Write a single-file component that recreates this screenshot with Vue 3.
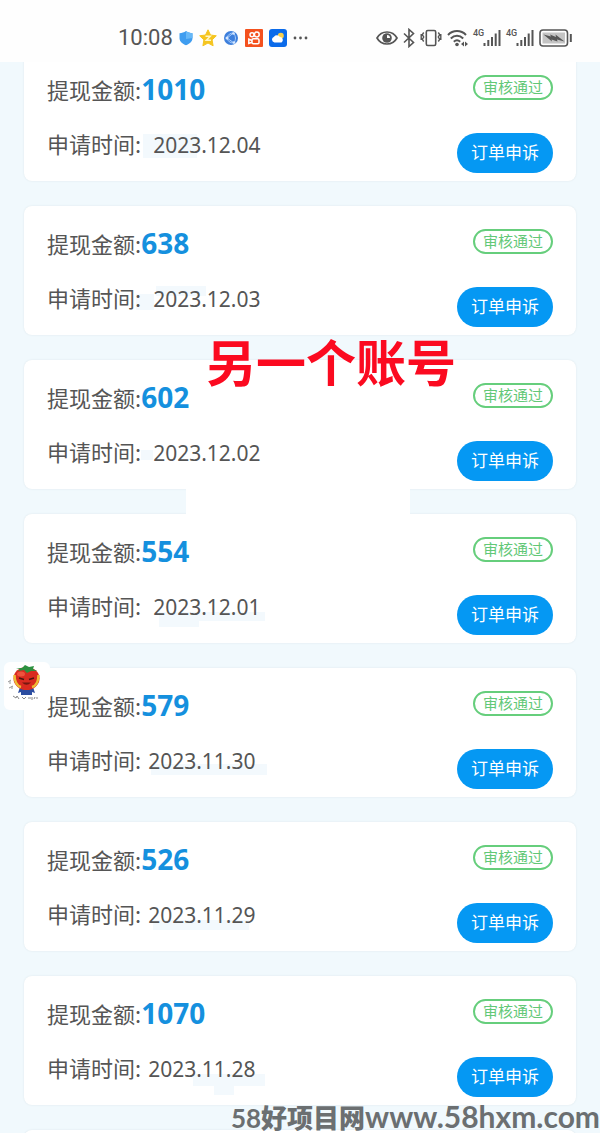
<template>
  <div class="page">
    <header class="status-bar">
      <div class="status-left">
        <span class="clock">10:08</span>
        <svg width="14" height="16" viewBox="0 0 14 16">
          <path d="M7 1C9 2.400 11 3 13.500 3.200V8C13.500 11.500 10.500 14 7 15.300C3.500 14 .5 11.500 .5 8V3.200C3 3 5 2.400 7 1Z" fill="#3f9df0" />
          <path d="M7 1C9 2.400 11 3 13.500 3.200V8L7 9Z" fill="#67b8f7" />
        </svg>
        <svg width="18" height="18" viewBox="0 0 18 18">
          <path d="M9 .8L11.500 6L17.300 6.800L13.100 10.900L14.100 16.800L9 14L3.900 16.800L4.900 10.900L.7 6.800L6.500 6Z" fill="#f5c51f" stroke="#f5c51f" stroke-linejoin="round" />
          <path d="M6.500 7.200H11.300L7.300 11.300H12" fill="none" stroke="#fff6c8" stroke-width="1.500" />
        </svg>
        <svg width="16" height="16" viewBox="0 0 16 16">
          <circle cx="8" cy="8" r="7" fill="#3d7fdc" />
          <path d="M10.500 3L4 8L11 13M10.500 3C13 6 13 10 11 13M4 8C5 4.500 7 3 10.500 3M4 8C5 11.500 7 13 11 13" fill="none" stroke="#a9cdfb" stroke-width="1" />
          <circle cx="4" cy="8" r="1.500" fill="#d5e7ff" />
          <circle cx="10.500" cy="3.500" r="1.300" fill="#d5e7ff" />
          <circle cx="11" cy="12.500" r="1.300" fill="#d5e7ff" />
        </svg>
        <svg width="18" height="18" viewBox="0 0 18 18">
          <rect width="18" height="18" rx="1" fill="#f4511e" />
          <g fill="none" stroke="#fff" stroke-width="1.500">
            <circle cx="7" cy="5.800" r="2" />
            <circle cx="11.800" cy="5.500" r="2.400" />
            <rect x="7" y="9.800" width="7" height="5" rx="1.300" />
            <path d="M7 11.500L3.800 10.200V14.500L7 13.200" />
          </g>
        </svg>
        <svg width="18" height="18" viewBox="0 0 18 18">
          <rect width="18" height="18" rx="3" fill="#0b6bea" />
          <circle cx="11.800" cy="6.800" r="3" fill="#f8cf4d" />
          <path d="M5.500 13.500A3 3 0 0 1 5 7.700A3.700 3.700 0 0 1 11 8A3 3 0 0 1 12.500 13.500Z" fill="#fff" />
        </svg>
        <svg width="15" height="4" viewBox="0 0 15 4">
          <g fill="#555">
            <circle cx="2" cy="2" r="1.400" />
            <circle cx="7.500" cy="2" r="1.400" />
            <circle cx="13" cy="2" r="1.400" />
          </g>
        </svg>
      </div>

      <div class="status-right">
        <svg width="22" height="16" viewBox="0 0 22 16">
          <path d="M1 8C5.500 0 16.500 0 21 8C16.500 16 5.500 16 1 8Z" fill="none" stroke="#555" stroke-width="1.700" />
          <circle cx="11" cy="8" r="4.800" fill="#555" />
          <path d="M11 5A3 3 0 0 1 14 8H11Z" fill="#fff" />
        </svg>
        <svg width="12" height="20" viewBox="0 0 12 20">
          <path d="M1 5.500L10.500 14.500L6 18.500V1.500L10.500 5.500L1 14.500" fill="none" stroke="#555" stroke-width="1.600" />
        </svg>
        <svg width="22" height="18" viewBox="0 0 22 18">
          <g fill="none" stroke="#555">
            <rect x="6.300" y="1.500" width="9.400" height="15" rx="1.500" stroke-width="1.600" />
            <path d="M3.700 3.500L2.300 5.700L3.700 8L2.300 10.300L3.700 12.500M1.200 5V11M18.300 3.500L19.700 5.700L18.300 8L19.700 10.300L18.300 12.500M20.800 5V11" stroke-width="1.400" />
          </g>
        </svg>
        <svg width="21" height="18" viewBox="0 0 21 18">
          <g fill="none" stroke="#555" stroke-width="2">
            <path d="M1 6C6 .8 14 .8 19 6" />
            <path d="M3.800 9.500C7.500 5.800 12.500 5.800 16.200 9.500" />
            <path d="M6.800 12.700C8.800 10.800 11.200 10.800 13.200 12.700" />
          </g>
          <circle cx="10" cy="15.500" r="1.800" fill="#555" />
          <path d="M17 12.500V17.500L14 15ZM18 12.500V17.500L21 15Z" fill="#555" />
        </svg>
        <div v-for="n in 2" :key="n" class="signal">
          <span>4G</span>
          <svg width="18" height="18" viewBox="0 0 18 18">
            <path d="M1.500 14V17M5.300 11V17M9 8V17M12.700 4.500V17M16.500 1V17" stroke="#555" stroke-width="2" />
          </svg>
        </div>
        <svg width="33" height="18" viewBox="0 0 33 18">
          <rect x="1" y="1" width="27.500" height="16" rx="3" fill="none" stroke="#555" stroke-width="1.600" />
          <rect x="3.500" y="3.500" width="22.500" height="11" fill="#c4c4c4" />
          <path d="M4.500 5.500L12 7.500L11 5.500L17 8L16.500 5.500L25.500 12.500L18 10.500L18.500 12.500L12.500 10.500L13 12.500Z" fill="#555" />
          <path d="M31.800 5V13" stroke="#555" stroke-width="2" />
        </svg>
      </div>
    </header>

    <main class="list">
      <section v-for="item in records" :key="item.date" class="card">
        <div class="row">
          <p class="label">提现金额:<strong>{{ item.amount }}</strong></p>
          <span class="badge">审核通过</span>
        </div>
        <div class="row row-time">
          <p class="label">
            申请时间:<time :class="{ near: item.near }">{{ item.date }}</time>
          </p>
          <button type="button" class="appeal">订单申诉</button>
        </div>
        <i
          v-for="(s, i) in item.smears"
          :key="i"
          class="smear"
          :style="{ left: s[0] + 'px', top: s[1] + 'px', width: s[2] + 'px', height: s[3] + 'px' }"
        ></i>
      </section>
      <section class="card"></section>
      <div class="patch"></div>
    </main>

    <h1 class="caption">另一个账号</h1>

    <div class="mascot">
      <svg width="46" height="48" viewBox="0 0 46 48">
        <path d="M16 25H29L31 31L28 30V33H17V30L14 31Z" fill="#2c4da0" />
        <ellipse cx="22.500" cy="16.500" rx="13" ry="11.500" fill="#d92b20" />
        <ellipse cx="17" cy="12" rx="4" ry="2.500" fill="#f0523d" />
        <path d="M12 6L18 6L21 3L25 5L30 4L29 7L33 9L27 9L23 11L20 8L14 9L16 7Z" fill="#2c9140" />
        <path d="M10.500 13C10.500 19 13 24 17 25M34.500 13C34.500 19 32 24 28 25" fill="none" stroke="#edbd35" stroke-width="2.500" />
        <path d="M15 16L20 17.500M30 16L25 17.500" stroke="#4a1712" stroke-width="1.500" />
        <path d="M18 20.500Q22.500 25 27 20.500Z" fill="#751810" />
        <path d="M4 20L7 18M6 19V22M5 26L9 24M8 24V27" stroke="#999" stroke-width="1" />
        <path d="M9 34L12 36L13 34L15 37M18 35L20 37L22 35M24 36H27M28 35V38M31 35L30 37M33 35V37" fill="none" stroke="#888" stroke-width="1" />
      </svg>
    </div>

    <footer class="watermark"><span class="prefix">58</span><b>好项目网</b><span>www.58hxm.com</span></footer>
  </div>
</template>

<script setup>
  // near: 日期緊貼標籤；smears: 日期周圍的淡藍色塊 [left, top, width, height]
  const records = [
    { amount: 1010, date: '2023.12.04', near: false, smears: [[119, 82, 54, 24]] },
    { amount: 638, date: '2023.12.03', near: false, smears: [[112, 88, 18, 16], [132, 80, 50, 10]] },
    { amount: 602, date: '2023.12.02', near: false, smears: [[117, 90, 12, 10]] },
    { amount: 554, date: '2023.12.01', near: false, smears: [[135, 98, 40, 15], [175, 98, 66, 9]] },
    { amount: 579, date: '2023.11.30', near: true, smears: [[127, 96, 116, 11]] },
    { amount: 526, date: '2023.11.29', near: true, smears: [[129, 98, 96, 10]] },
    { amount: 1070, date: '2023.11.28', near: true, smears: [[169, 98, 72, 12], [190, 110, 20, 9]] }
  ];
</script>

<style>
  body {
    margin: 0;
    background: #f1f9fd;
  }
</style>

<style scoped>
  .page {
    position: relative;
    height: 100vh;
    overflow: hidden;
    background: #f1f9fd;
    color: #555;
    font-family: "Noto Sans CJK SC", sans-serif;
  }

  .status-bar {
    position: relative;
    z-index: 2;
    display: flex;
    justify-content: space-between;
    box-sizing: border-box;
    height: 62px;
    padding: 14px 28px 0 118px;
    background: #fefefe;
  }

  .status-left,
  .status-right {
    display: flex;
    align-items: center;
    height: 48px;
  }

  .status-left {
    gap: 6px;
  }

  .status-right {
    gap: 5px;
  }

  .clock {
    font-family: Roboto, sans-serif;
    font-size: 22px;
    line-height: 24px;
  }

  .signal {
    display: flex;
    align-items: flex-start;
  }

  .signal span {
    width: 10px;
    font-family: Roboto, sans-serif;
    font-size: 9px;
    font-weight: 500;
    line-height: 9px;
  }

  .list {
    position: relative;
    display: flex;
    flex-direction: column;
    gap: 25px;
    margin-top: -10px;
    padding: 0 24px;
  }

  .card {
    position: relative;
    box-sizing: border-box;
    min-height: 129px;
    padding: 18px 23px 8px;
    border-radius: 8px;
    background: #fff;
    box-shadow: 0 0 2px #dbe5ea;
  }

  .row {
    position: relative;
    z-index: 1;
    display: flex;
    justify-content: space-between;
    height: 40px;
  }

  .row-time {
    align-items: flex-end;
    height: 63px;
  }

  .label {
    display: flex;
    align-items: center;
    height: 38px;
    margin: 0;
    font-size: 22px;
    line-height: 38px;
  }

  .row-time .label {
    align-self: flex-start;
    padding-top: 14px;
  }

  .label strong {
    color: #1590de;
    font-family: "Noto Sans", sans-serif;
    font-size: 28px;
    font-weight: 700;
  }

  .label time {
    margin-left: 12px;
    padding-top: 4px;
    font-family: "Noto Sans", sans-serif;
    font-size: 21px;
  }

  .label .near {
    margin-left: 7px;
  }

  .badge {
    box-sizing: border-box;
    height: 25px;
    margin-top: 5px;
    padding: 0 8px;
    border: 2px solid #66ce7c;
    border-radius: 13px;
    color: #62c877;
    font-size: 15px;
    line-height: 20px;
  }

  .appeal {
    height: 40px;
    padding: 0 14px 2px;
    border: 0;
    border-radius: 20px;
    background: #0598f3;
    color: #fff;
    font-family: inherit;
    font-size: 17px;
    line-height: 24px;
  }

  .smear {
    position: absolute;
    background: #f3f9fd;
  }

  /* 第三、四張卡片之間的白色遮塊 */
  .patch {
    position: absolute;
    top: 436px;
    left: 186px;
    width: 224px;
    height: 28px;
    background: #fff;
  }

  .caption {
    position: absolute;
    z-index: 3;
    top: 330px;
    left: 206px;
    margin: 0;
    color: #fb0a20;
    font-size: 50px;
    font-weight: 700;
    line-height: 60px;
    white-space: nowrap;
  }

  .mascot {
    position: absolute;
    z-index: 3;
    top: 662px;
    left: 4px;
    height: 48px;
    border-radius: 6px;
    background: #fff;
  }

  .watermark {
    position: absolute;
    z-index: 3;
    right: 0;
    bottom: 0;
    display: flex;
    align-items: baseline;
    color: #6b6f71;
    font-family: Lato, sans-serif;
    font-size: 30px;
    font-weight: 700;
    line-height: 30px;
    white-space: nowrap;
  }

  .watermark .prefix {
    font-size: 26px;
  }

  .watermark b {
    font-family: "Noto Sans CJK SC", sans-serif;
    font-size: 26px;
    font-weight: 900;
  }
</style>
